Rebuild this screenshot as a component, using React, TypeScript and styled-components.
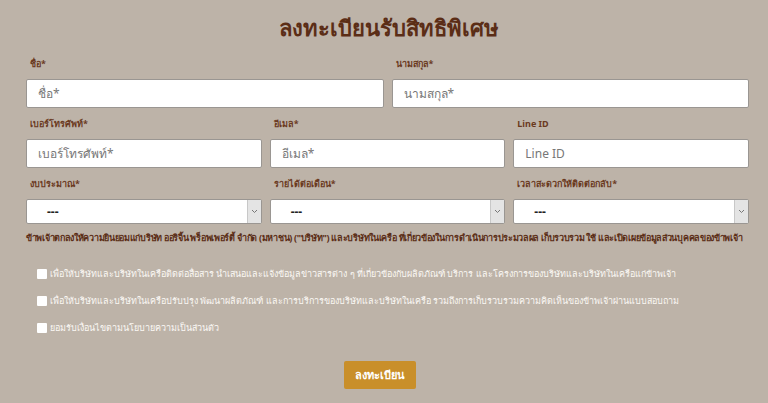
import styled, { createGlobalStyle } from "styled-components"

const GlobalStyle = createGlobalStyle`
  html, body {
    margin: 0;
    padding: 0;
    background: #bdb3a8;
    font-family: "Noto Sans", "Liberation Sans", sans-serif;
  }
`

const Page = styled.div`
  width: 768px;
  height: 403px;
  box-sizing: border-box;
  padding: 10px 19px 0 26px;
  background: #bdb3a8;
  overflow: hidden;
`

const Title = styled.h1`
  margin: 0 0 13px 0;
  text-align: center;
  font-size: 22px;
  line-height: 34px;
  font-weight: 700;
  color: #5b2d16;
  padding-left: 3px;
`

const Row = styled.div<{ cols: number }>`
  display: grid;
  grid-template-columns: repeat(${p => p.cols}, 1fr);
  column-gap: 8px;
  margin-bottom: 9px;
`

const Field = styled.div`
  display: flex;
  flex-direction: column;
`

const Label = styled.label`
  font-size: 9px;
  line-height: 14px;
  font-weight: 700;
  color: #6b3a1f;
  padding-left: 4px;
  margin-bottom: 8px;
`

const Input = styled.input`
  box-sizing: border-box;
  height: 29px;
  border: 1px solid #9a9692;
  border-radius: 2px;
  background: #fff;
  padding: 0 11px;
  font-family: inherit;
  font-size: 12px;
  color: #333;
  outline: none;
  &::placeholder {
    color: #777;
  }
`

const SelectBox = styled.div`
  display: flex;
  height: 25px;
  box-sizing: border-box;
  border: 1px solid #9a9692;
  border-radius: 2px;
  background: #fff;
  overflow: hidden;
`

const SelectText = styled.div`
  flex: 1;
  display: flex;
  align-items: center;
  padding-left: 20px;
  font-size: 12px;
  font-weight: 700;
  color: #222;
`

const SelectArrow = styled.div`
  width: 13px;
  border-left: 1px solid #c8c8c8;
  background: #e4e4e4;
  display: flex;
  align-items: center;
  justify-content: center;
  svg {
    width: 7px;
    height: 5px;
  }
`

const Consent = styled.p`
  margin: -3px 0 20px 0;
  font-size: 9px;
  letter-spacing: -0.3px;
  white-space: nowrap;
  line-height: 16px;
  font-weight: 700;
  color: #5b2d16;
`

const CheckList = styled.div`
  display: flex;
  flex-direction: column;
  gap: 11px;
  padding-left: 11px;
`

const CheckRow = styled.label`
  display: flex;
  align-items: center;
  gap: 3px;
  font-size: 9px;
  line-height: 16px;
  color: #fbf8f4;
`

const Box = styled.span`
  width: 10px;
  height: 10px;
  background: #fff;
  border-radius: 1px;
  flex: none;
`

const Actions = styled.div`
  display: flex;
  justify-content: center;
  padding-right: 15px;
  margin-top: 25px;
`

const Submit = styled.button`
  width: 72px;
  height: 28px;
  border: none;
  border-radius: 2px;
  background: #c98f2a;
  color: #fff;
  font-family: inherit;
  font-size: 11px;
  font-weight: 700;
`

function Select({ label }: { label: string }) {
  return (
    <Field>
      <Label>{label}</Label>
      <SelectBox>
        <SelectText>---</SelectText>
        <SelectArrow>
          <svg viewBox="0 0 7 5">
            <path d="M1 1 L3.5 3.5 L6 1" fill="none" stroke="#777" strokeWidth="1" />
          </svg>
        </SelectArrow>
      </SelectBox>
    </Field>
  )
}

const checks = [
  "เพื่อให้บริษัทและบริษัทในเครือติดต่อสื่อสาร นำเสนอและแจ้งข้อมูลข่าวสารต่าง ๆ ที่เกี่ยวข้องกับผลิตภัณฑ์ บริการ และโครงการของบริษัทและบริษัทในเครือแก่ข้าพเจ้า",
  "เพื่อให้บริษัทและบริษัทในเครือปรับปรุง พัฒนาผลิตภัณฑ์ และการบริการของบริษัทและบริษัทในเครือ รวมถึงการเก็บรวบรวมความคิดเห็นของข้าพเจ้าผ่านแบบสอบถาม",
  "ยอมรับเงื่อนไขตามนโยบายความเป็นส่วนตัว",
]

export default function App() {
  return (
    <>
      <GlobalStyle />
      <Page>
        <Title>ลงทะเบียนรับสิทธิพิเศษ</Title>
        <Row cols={2}>
          <Field>
            <Label>ชื่อ*</Label>
            <Input placeholder="ชื่อ*" />
          </Field>
          <Field>
            <Label>นามสกุล*</Label>
            <Input placeholder="นามสกุล*" />
          </Field>
        </Row>
        <Row cols={3}>
          <Field>
            <Label>เบอร์โทรศัพท์*</Label>
            <Input placeholder="เบอร์โทรศัพท์*" />
          </Field>
          <Field>
            <Label>อีเมล*</Label>
            <Input placeholder="อีเมล*" />
          </Field>
          <Field>
            <Label>Line ID</Label>
            <Input placeholder="Line ID" />
          </Field>
        </Row>
        <Row cols={3}>
          <Select label="งบประมาณ*" />
          <Select label="รายได้ต่อเดือน*" />
          <Select label="เวลาสะดวกให้ติดต่อกลับ*" />
        </Row>
        <Consent>
          ข้าพเจ้าตกลงให้ความยินยอมแก่บริษัท ออริจิ้น พร็อพเพอร์ตี้ จำกัด (มหาชน) ("บริษัท") และบริษัทในเครือ ที่เกี่ยวข้องในการดำเนินการประมวลผล เก็บรวบรวม ใช้ และเปิดเผยข้อมูลส่วนบุคคลของข้าพเจ้า
        </Consent>
        <CheckList>
          {checks.map(text => (
            <CheckRow key={text}>
              <Box />
              {text}
            </CheckRow>
          ))}
        </CheckList>
        <Actions>
          <Submit type="button">ลงทะเบียน</Submit>
        </Actions>
      </Page>
    </>
  )
}
